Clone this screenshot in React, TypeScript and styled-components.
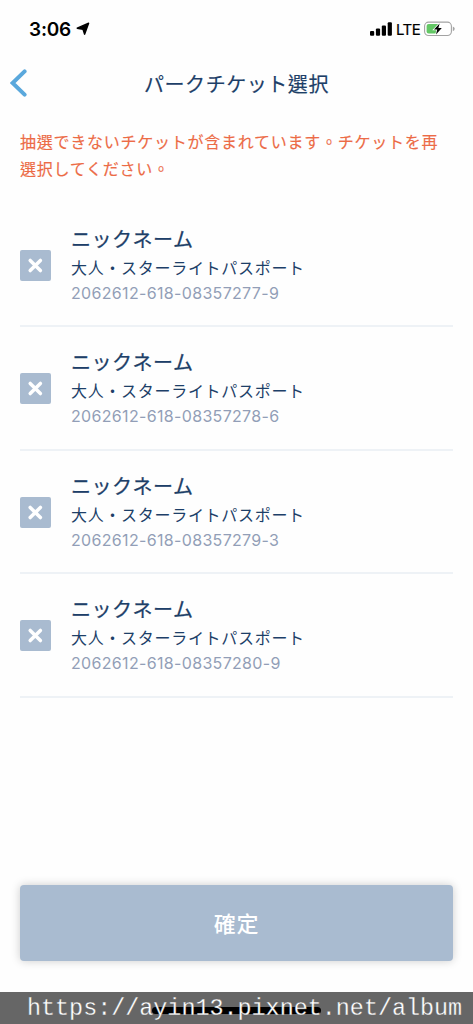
import { createGlobalStyle, styled } from 'styled-components';

interface Ticket {
  nickname: string;
  type: string;
  code: string;
}

const tickets: Ticket[] = [
  { nickname: 'ニックネーム', type: '大人・スターライトパスポート', code: '2062612-618-08357277-9' },
  { nickname: 'ニックネーム', type: '大人・スターライトパスポート', code: '2062612-618-08357278-6' },
  { nickname: 'ニックネーム', type: '大人・スターライトパスポート', code: '2062612-618-08357279-3' },
  { nickname: 'ニックネーム', type: '大人・スターライトパスポート', code: '2062612-618-08357280-9' },
];

const StatusBar = () => {
  return (
    <StatusBarContainer>
      <Clock>
        3:06
        <svg width="14" height="14" viewBox="0 0 14 14">
          <path d="M12.6 1.2 L8.6 12.2 L7 7.2 L1.2 6.2 Z" fill="#000" stroke="#000" strokeWidth="1.4" strokeLinejoin="round" />
        </svg>
      </Clock>
      <StatusIcons>
        <svg width="22" height="14" viewBox="0 0 22 14">
          <rect x="0" y="9" width="4.2" height="4.8" rx="1.1" />
          <rect x="5.9" y="6.4" width="4.2" height="7.4" rx="1.1" />
          <rect x="11.8" y="3.4" width="4.2" height="10.4" rx="1.1" />
          <rect x="17.7" y="0.2" width="4.2" height="13.6" rx="1.1" />
        </svg>
        <Network>LTE</Network>
        <svg width="31" height="16" viewBox="0 0 31 16">
          <rect x="0.6" y="1.1" width="26.8" height="13.4" rx="4" fill="#fff" stroke="#a3a3a3" strokeWidth="1.1" />
          <path d="M4.7 3.1 H14 V12.6 H4.7 Q2.6 12.6 2.6 10.6 V5.1 Q2.6 3.1 4.7 3.1 Z" fill="#63c765" />
          <path d="M28.8 5.4 Q30.7 6.2 30.7 7.8 Q30.7 9.4 28.8 10.2 Z" fill="#a3a3a3" />
          <path
            d="M15.6 2.4 L10 8.5 H13.2 L12 13.6 L17.8 7.1 H14.4 Z"
            fill="#000"
            stroke="#fff"
            strokeWidth="1.5"
            paintOrder="stroke"
          />
        </svg>
      </StatusIcons>
    </StatusBarContainer>
  );
};

const TicketItem = ({ ticket }: { ticket: Ticket }) => {
  return (
    <TicketRow>
      <TicketCheck aria-label={ticket.code}>
        <svg width="31" height="31" viewBox="0 0 31 31">
          <path d="M10.2 10.4 L20.4 20.6 M20.4 10.4 L10.2 20.6" stroke="#fff" strokeWidth="3.5" strokeLinecap="round" />
        </svg>
      </TicketCheck>
      <TicketInfo>
        <Nickname>{ticket.nickname}</Nickname>
        <TicketType>{ticket.type}</TicketType>
        <TicketCode>{ticket.code}</TicketCode>
      </TicketInfo>
    </TicketRow>
  );
};

const App = () => {
  return (
    <>
      <GlobalStyle />
      <Screen lang="zh-Hant">
        <StatusBar />
        <Header>
          <BackButton aria-label="back">
            <svg width="18" height="28" viewBox="0 0 18 28">
              <path d="M14.6 2.4 L2.6 14 L14.6 25.6" fill="none" stroke="#5aa8dc" strokeWidth="4" strokeLinecap="round" strokeLinejoin="miter" />
            </svg>
          </BackButton>
          <Title>パークチケット選択</Title>
        </Header>
        <Warning>抽選できないチケットが含まれています。チケットを再選択してください。</Warning>
        <TicketList>
          {tickets.map((ticket) => (
            <TicketItem key={ticket.code} ticket={ticket} />
          ))}
        </TicketList>
        <ConfirmButton>確定</ConfirmButton>
        <Footer>
          <HomeIndicator />
          <FooterUrl>https://ayin13.pixnet.net/album</FooterUrl>
        </Footer>
      </Screen>
    </>
  );
};

const GlobalStyle = createGlobalStyle`
  * {
    box-sizing: border-box;
  }

  body {
    margin: 0;
    background-color: #fefefe;
  }

  svg {
    display: block;
  }

  button {
    padding: 0;
    border: none;
    font-family: inherit;
  }
`;

const Screen = styled.div`
  width: 473px;
  height: 1024px;
  display: flex;
  flex-direction: column;
  overflow: hidden;
  background-color: #fefefe;
  color: #1d3f68;
  font-family: Inter, 'Noto Sans CJK TC', sans-serif;
`;

const StatusBarContainer = styled.div`
  height: 58px;
  padding: 0 18px 0 29px;
  display: flex;
  align-items: center;
  justify-content: space-between;
  color: #000;
`;

const Clock = styled.div`
  display: flex;
  align-items: center;
  gap: 5px;
  font-size: 19px;
  font-weight: 600;
  letter-spacing: -0.2px;
`;

const StatusIcons = styled.div`
  display: flex;
  align-items: center;
`;

const Network = styled.span`
  width: 32px;
  padding-left: 4px;
  font-size: 15px;
  letter-spacing: -0.5px;
  -webkit-text-stroke: 0.2px currentColor;
`;

const Header = styled.header`
  height: 50px;
  padding: 0 10px;
  display: grid;
  grid-template-columns: 18px 1fr 18px;
  align-items: center;
`;

const BackButton = styled.button`
  background: none;
`;

const Title = styled.h1`
  margin: 2px 0 0;
  font-family: 'Noto Sans CJK TC', sans-serif;
  font-size: 20px;
  font-weight: 400;
  line-height: 28px;
  letter-spacing: 0.55px;
  text-align: center;
  -webkit-text-stroke: 0.15px currentColor;
`;

const Warning = styled.p`
  margin: 20px 20px 0;
  height: 75.4px;
  color: #ec6b46;
  font-family: 'Noto Sans CJK TC', sans-serif;
  font-size: 16px;
  font-weight: 400;
  line-height: 27px;
  letter-spacing: 0.75px;
  word-break: break-all;
  -webkit-text-stroke: 0.15px currentColor;
`;

const TicketList = styled.ul`
  flex: 1;
  margin: 0;
  padding: 0 20px;
  list-style: none;
`;

const TicketRow = styled.li`
  height: 123.6px;
  padding-top: 2px;
  display: flex;
  align-items: center;
  gap: 20px;
  border-bottom: 2px solid #eef2f6;
`;

const TicketCheck = styled.button`
  width: 31px;
  height: 31px;
  border-radius: 2px;
  background-color: #a9bbd0;
`;

const TicketInfo = styled.div`
  display: flex;
  flex-direction: column;
`;

const Nickname = styled.strong`
  font-family: 'Noto Sans CJK TC', sans-serif;
  font-size: 20px;
  font-weight: 400;
  line-height: 30px;
  letter-spacing: 0.5px;
  -webkit-text-stroke: 0.25px currentColor;
`;

const TicketType = styled.span`
  font-family: 'Noto Sans CJK TC', sans-serif;
  font-size: 16px;
  line-height: 26px;
  letter-spacing: 0.7px;
`;

const TicketCode = styled.span`
  color: #929eb7;
  font-size: 16px;
  line-height: 27px;
  letter-spacing: 0.33px;
`;

const ConfirmButton = styled.button`
  flex-shrink: 0;
  height: 76px;
  margin: 0 20px 31px;
  padding-bottom: 3px;
  border-radius: 4px;
  background-color: #a9bbd0;
  box-shadow: 0 0 10px rgba(0, 0, 0, 0.2);
  color: #fff;
  font-size: 22px;
  font-weight: 500;
  letter-spacing: 0.8px;
`;

const Footer = styled.footer`
  position: relative;
  flex-shrink: 0;
  height: 32px;
  background-color: #666;
`;

const HomeIndicator = styled.div`
  position: absolute;
  left: 152px;
  top: 15px;
  width: 169px;
  height: 7px;
  border-radius: 4px;
  background-color: #000;
`;

const FooterUrl = styled.span`
  position: relative;
  display: block;
  padding: 1px 0 0 27px;
  color: #fff;
  font-family: 'Liberation Mono', monospace;
  font-size: 23.4px;
  line-height: 32px;
  white-space: nowrap;
  -webkit-text-stroke: 0.3px #666;
`;

export default App;
